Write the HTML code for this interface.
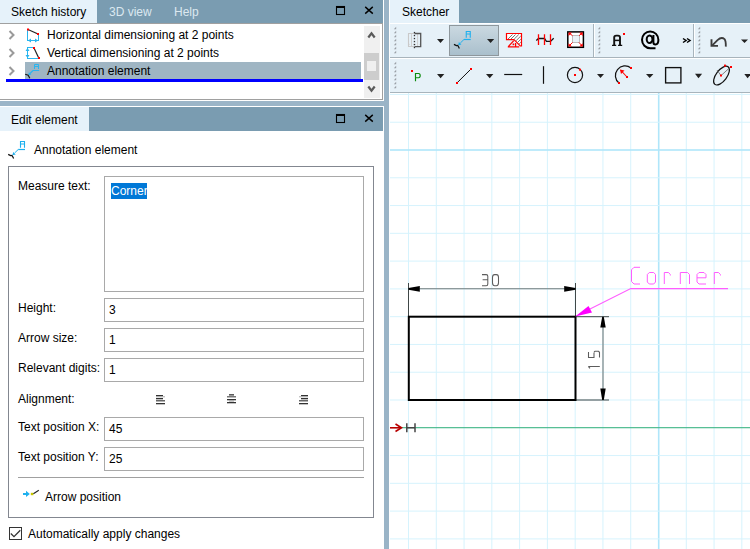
<!DOCTYPE html>
<html><head><meta charset="utf-8">
<style>
*{margin:0;padding:0;box-sizing:border-box}
html,body{width:750px;height:549px;overflow:hidden;background:#fff}
body{position:relative;font-family:"Liberation Sans",sans-serif;font-size:12px;color:#000}
.a{position:absolute}
.t{position:absolute;white-space:nowrap;line-height:14px}
.hdr{background:#7a9cb1}
.tab{background:#e6f2fa}
.inact{color:#dce8f0}
.inp{position:absolute;border:1px solid #a9a9a9;background:#fff}
.grid{position:absolute}
</style></head><body>

<!-- LEFT PANEL -->
<div class="a" style="left:0;top:0;width:384px;height:549px;background:#fff"></div>
<!-- top header -->
<div class="a hdr" style="left:0;top:0;width:383px;height:23px"></div>
<div class="a tab" style="left:0;top:0;width:97px;height:23px"></div>
<div class="t" style="left:11px;top:5px">Sketch history</div>
<div class="t inact" style="left:109px;top:5px">3D view</div>
<div class="t inact" style="left:174px;top:5px">Help</div>
<svg class="a" style="left:334px;top:5px" width="42" height="12" viewBox="334 5 42 12">
 <rect x="336.5" y="6.5" width="8" height="8" fill="none" stroke="#000" stroke-width="1.1"/>
 <rect x="336" y="6" width="9" height="2" fill="#000"/>
 <path d="M365.2 6.9 L372.8 13.6 M372.8 6.9 L365.2 13.6" stroke="#000" stroke-width="1.4"/>
</svg>
<!-- tree box -->
<div class="a" style="left:0;top:23px;width:383px;height:77px;border-top:1px solid #a0a0a0;border-right:1px solid #a0a0a0;border-bottom:1px solid #a0a0a0;background:#fff"></div>

<!-- tree content -->
<svg class="a" style="left:0;top:24px" width="382" height="75" viewBox="0 24 382 75">
 <rect x="25" y="62" width="336" height="17" fill="#9fb5c3"/>
 <rect x="6" y="79" width="357" height="3" fill="#0000ff"/>
 <rect x="364" y="26" width="16" height="72" fill="#f0f0f0"/>
 <rect x="364" y="53" width="15" height="27" fill="#cdcdcd"/>
 <rect x="367" y="61" width="9" height="10" fill="#efefef"/>
 <path d="M368.3 37.5 L371.5 33.3 L374.7 37.5" fill="none" stroke="#5a5a5a" stroke-width="2.2"/>
 <path d="M368.3 86.5 L371.5 90.7 L374.7 86.5" fill="none" stroke="#5a5a5a" stroke-width="2.2"/>
 <g fill="none" stroke="#9a9a9a" stroke-width="2">
  <path d="M9.5 31 L13.5 35 L9.5 39"/>
  <path d="M9.5 49 L13.5 53 L9.5 57"/>
  <path d="M9.5 67 L13.5 71 L9.5 75"/>
 </g>
 <!-- icon1 -->
 <g stroke="#29b5ef" fill="none">
  <path d="M27.5 30 V41 M38.5 34 V41 M28 40.5 H38"/>
 </g>
 <path d="M28 40.5 L31 38.5 V42.5 Z M38 40.5 L35 38.5 V42.5 Z" fill="#29b5ef"/>
 <path d="M28 29.5 L38 34" stroke="#222" stroke-width="1.2"/>
 <rect x="27" y="28.5" width="2" height="2" fill="#f00"/>
 <rect x="37" y="33" width="2" height="2" fill="#f00"/>
 <!-- icon2 -->
 <g stroke="#29b5ef" fill="none">
  <path d="M27 47.5 H34 M27 58.5 H39 M27.5 48 V58"/>
 </g>
 <path d="M27.5 48 L25.5 51 H29.5 Z M27.5 58 L25.5 55 H29.5 Z" fill="#29b5ef"/>
 <path d="M34 48 L38.5 57.5" stroke="#222" stroke-width="1.2"/>
 <rect x="33" y="47" width="2" height="2" fill="#f00"/>
 <rect x="38" y="57" width="2" height="2" fill="#f00"/>
 <!-- icon3 -->
 <g stroke="#29b5ef" fill="none" stroke-width="1">
  <path d="M34.5 69 V64.5 H38.5 V69 M34.5 66.5 H38.5"/>
  <path d="M33 70.5 H39.2 M33 70.5 L30 73.5" stroke-width="1.1"/>
 </g>
 <path d="M28.2 75.3 L28.9 72.2 L31.4 74.6 Z" fill="#29b5ef"/>
 <path d="M25.2 74.2 L28.2 75.3 L29.8 78.2" fill="none" stroke="#1a1a1a" stroke-width="1.2"/>
</svg>
<div class="t" style="left:47px;top:28px">Horizontal dimensioning at 2 points</div>
<div class="t" style="left:47px;top:46px">Vertical dimensioning at 2 points</div>
<div class="t" style="left:47px;top:64px">Annotation element</div>

<!-- strip -->
<div class="a" style="left:0;top:101px;width:384px;height:5px;background:#9bb5c8"></div>
<!-- edit header -->
<div class="a hdr" style="left:0;top:107px;width:383px;height:24px"></div>
<div class="a tab" style="left:0;top:107px;width:89px;height:24px"></div>
<div class="t" style="left:11px;top:113px">Edit element</div>
<svg class="a" style="left:334px;top:113px" width="42" height="12" viewBox="334 113 42 12">
 <rect x="336.5" y="114.5" width="8" height="8" fill="none" stroke="#000" stroke-width="1.1"/>
 <rect x="336" y="114" width="9" height="2" fill="#000"/>
 <path d="M365.2 114.9 L372.8 121.6 M372.8 114.9 L365.2 121.6" stroke="#000" stroke-width="1.4"/>
</svg>

<!-- edit content -->
<svg class="a" style="left:4px;top:138px" width="24" height="24" viewBox="4 138 24 24">
 <g stroke="#1eb0ee" fill="none">
  <path d="M20.5 147.8 V141.5 H24.5 V147.8" stroke-width="1.1"/>
  <path d="M20.5 144 H24.5" stroke-width="1"/>
  <path d="M18.2 149.5 H25" stroke-width="1.2"/>
  <path d="M18.2 149.5 L14.6 153" stroke-width="1"/>
 </g>
 <path d="M12.5 155.3 L13.1 152.1 L15.7 154.6 Z" fill="#1eb0ee"/>
 <path d="M8.2 154.4 L10.6 155.6 L12.6 155.4 M12.4 156 L13.6 158.5" fill="none" stroke="#111" stroke-width="1.2"/>
</svg>
<div class="t" style="left:34px;top:143px">Annotation element</div>
<div class="a" style="left:8px;top:166px;width:366px;height:352px;border:1px solid #838790"></div>
<div class="t" style="left:18px;top:179px">Measure text:</div>
<div class="inp" style="left:104px;top:176px;width:260px;height:116px"></div>
<div class="a" style="left:111px;top:183px;width:36px;height:16px;background:#0078d7"></div>
<div class="t" style="left:111px;top:184px;color:#fff">Corner</div>

<div class="t" style="left:18px;top:301px">Height:</div>
<div class="inp" style="left:104px;top:298px;width:260px;height:24px"></div>
<div class="t" style="left:109px;top:303px">3</div>
<div class="t" style="left:18px;top:331px">Arrow size:</div>
<div class="inp" style="left:104px;top:328px;width:260px;height:24px"></div>
<div class="t" style="left:109px;top:333px">1</div>
<div class="t" style="left:18px;top:361px">Relevant digits:</div>
<div class="inp" style="left:104px;top:358px;width:260px;height:24px"></div>
<div class="t" style="left:109px;top:363px">1</div>
<div class="t" style="left:18px;top:392px">Alignment:</div>
<svg class="a" style="left:150px;top:388px" width="170" height="20" viewBox="150 388 170 20">
 <g fill="#333">
  <rect x="156" y="395" width="7" height="1.3"/><rect x="156" y="396.3" width="9" height="1" fill="#aaa"/>
  <rect x="156" y="398" width="7" height="1.3"/><rect x="156" y="400" width="9" height="1.5" fill="#666"/>
  <rect x="156" y="403" width="9" height="1.3"/>
  <rect x="229" y="394.2" width="5" height="1.3"/><rect x="227" y="396" width="9" height="1.5" fill="#777"/>
  <rect x="227" y="399" width="9" height="1.3"/><rect x="229" y="400.5" width="5" height="1" fill="#999"/>
  <rect x="227" y="402" width="9" height="1.3"/>
  <rect x="301" y="395" width="7" height="1.3"/><rect x="299" y="396.3" width="9" height="1" fill="#aaa"/>
  <rect x="301" y="398" width="7" height="1.3"/><rect x="299" y="400" width="9" height="1.5" fill="#666"/>
  <rect x="299" y="403" width="9" height="1.3"/>
 </g>
</svg>
<div class="t" style="left:18px;top:420px">Text position X:</div>
<div class="inp" style="left:104px;top:417px;width:260px;height:24px"></div>
<div class="t" style="left:109px;top:422px">45</div>
<div class="t" style="left:18px;top:450px">Text position Y:</div>
<div class="inp" style="left:104px;top:447px;width:260px;height:24px"></div>
<div class="t" style="left:109px;top:452px">25</div>
<div class="a" style="left:18px;top:477px;width:346px;height:1px;background:#a0a0a0"></div>
<svg class="a" style="left:20px;top:486px" width="22" height="14" viewBox="20 486 22 14">
 <rect x="23" y="493" width="4" height="2" fill="#1eb0ee"/>
 <path d="M26 490.8 L29.8 494 L26 497 Z" fill="#1eb0ee"/>
 <rect x="30.8" y="492.8" width="2.6" height="2.4" fill="#c8c800"/>
 <path d="M33.4 493.8 L38.8 490.3" stroke="#222" stroke-width="1.1"/>
</svg>
<div class="t" style="left:45px;top:490px">Arrow position</div>
<div class="a" style="left:9px;top:527px;width:13px;height:13px;border:1px solid #333;background:#fff"></div>
<svg class="a" style="left:9px;top:527px" width="13" height="13" viewBox="9 527 13 13">
 <path d="M10.8 533.5 L14 536.6 L20.3 530.3" fill="none" stroke="#333" stroke-width="1.3"/>
</svg>
<div class="t" style="left:28px;top:527px">Automatically apply changes</div>

<!-- splitter -->
<div class="a" style="left:384px;top:0;width:5px;height:549px;background:#9ab4c7"></div>

<!-- RIGHT PANEL -->
<div class="a hdr" style="left:389px;top:0;width:361px;height:23px"></div>
<div class="a tab" style="left:390px;top:0;width:69px;height:23px"></div>
<div class="a" style="left:389px;top:0;width:1px;height:23px;background:#fff"></div>
<div class="t" style="left:402px;top:5px">Sketcher</div>








<!-- TOOLBARS -->
<svg class="a" style="left:389px;top:23px" width="361" height="70" viewBox="389 23 361 70">
 <rect x="389" y="23" width="361" height="70" fill="#fff"/>
 <rect x="390" y="24" width="203" height="33" fill="#e6f1f8"/>
 <rect x="593" y="24" width="1" height="33" fill="#a8b4bc"/>
 <rect x="595" y="24" width="98" height="33" fill="#e6f1f8"/>
 <rect x="693" y="24" width="1" height="33" fill="#a8b4bc"/>
 <rect x="695" y="24" width="55" height="33" fill="#e6f1f8"/>
 <rect x="390" y="57" width="360" height="1" fill="#a8b4bc"/>
 <rect x="390" y="59" width="360" height="33" fill="#e6f1f8"/>
 <rect x="390" y="92" width="360" height="1" fill="#a8b4bc"/>
 <path d="M396.2 26.8 V29.2 H393.8 Z" fill="#9aa0a6"/><path d="M396.2 30.8 V33.2 H393.8 Z" fill="#9aa0a6"/><path d="M396.2 34.8 V37.2 H393.8 Z" fill="#9aa0a6"/><path d="M396.2 38.8 V41.2 H393.8 Z" fill="#9aa0a6"/><path d="M396.2 42.8 V45.2 H393.8 Z" fill="#9aa0a6"/><path d="M396.2 46.8 V49.2 H393.8 Z" fill="#9aa0a6"/><path d="M396.2 50.8 V53.2 H393.8 Z" fill="#9aa0a6"/><path d="M600.2 26.8 V29.2 H597.8 Z" fill="#9aa0a6"/><path d="M600.2 30.8 V33.2 H597.8 Z" fill="#9aa0a6"/><path d="M600.2 34.8 V37.2 H597.8 Z" fill="#9aa0a6"/><path d="M600.2 38.8 V41.2 H597.8 Z" fill="#9aa0a6"/><path d="M600.2 42.8 V45.2 H597.8 Z" fill="#9aa0a6"/><path d="M600.2 46.8 V49.2 H597.8 Z" fill="#9aa0a6"/><path d="M600.2 50.8 V53.2 H597.8 Z" fill="#9aa0a6"/><path d="M700.2 26.8 V29.2 H697.8 Z" fill="#9aa0a6"/><path d="M700.2 30.8 V33.2 H697.8 Z" fill="#9aa0a6"/><path d="M700.2 34.8 V37.2 H697.8 Z" fill="#9aa0a6"/><path d="M700.2 38.8 V41.2 H697.8 Z" fill="#9aa0a6"/><path d="M700.2 42.8 V45.2 H697.8 Z" fill="#9aa0a6"/><path d="M700.2 46.8 V49.2 H697.8 Z" fill="#9aa0a6"/><path d="M700.2 50.8 V53.2 H697.8 Z" fill="#9aa0a6"/><path d="M396.2 61.8 V64.2 H393.8 Z" fill="#9aa0a6"/><path d="M396.2 65.8 V68.2 H393.8 Z" fill="#9aa0a6"/><path d="M396.2 69.8 V72.2 H393.8 Z" fill="#9aa0a6"/><path d="M396.2 73.8 V76.2 H393.8 Z" fill="#9aa0a6"/><path d="M396.2 77.8 V80.2 H393.8 Z" fill="#9aa0a6"/><path d="M396.2 81.8 V84.2 H393.8 Z" fill="#9aa0a6"/><path d="M396.2 85.8 V88.2 H393.8 Z" fill="#9aa0a6"/>
 <!-- mirror icon -->
 <path d="M414.3 33.5 H408.5 V46.5 H414.3" fill="none" stroke="#c9c9c9" stroke-width="1.1"/>
 <path d="M411.5 34 V46 M417.6 34 V46" stroke="#cfcfcf" stroke-width="1"/>
 <path d="M409 44.4 H414 M415 44.4 H420" stroke="#d5d5d5" stroke-width="0.8" stroke-dasharray="1 1"/>
 <path d="M414.5 33.5 H420.7 V46.6 H414.5" fill="none" stroke="#555" stroke-width="1.3"/>
 <g fill="#333"><rect x="413.8" y="31.9" width="1.3" height="1.3"/><rect x="413.8" y="34.9" width="1.3" height="1.3"/><rect x="413.8" y="37.9" width="1.3" height="1.3"/><rect x="413.8" y="40.9" width="1.3" height="1.3"/><rect x="413.8" y="43.9" width="1.3" height="1.3"/><rect x="413.8" y="46.9" width="1.3" height="1.3"/></g>
 <path d="M437 39 H444 L440.5 43 Z" fill="#222"/>
 <!-- active annotation button -->
 <defs><linearGradient id="ab" x1="0" y1="0" x2="0" y2="1"><stop offset="0" stop-color="#cbd9e1"/><stop offset="1" stop-color="#a9bfcc"/></linearGradient></defs>
 <rect x="449.5" y="25.5" width="49" height="30" fill="url(#ab)" stroke="#8e979c"/>
 <g transform="translate(445.75,-110)"><g stroke="#1eb0ee" fill="none">
  <path d="M20.5 147.8 V141.5 H24.5 V147.8" stroke-width="1.1"/>
  <path d="M20.5 144 H24.5" stroke-width="1"/>
  <path d="M18.2 149.5 H25" stroke-width="1.2"/>
  <path d="M18.2 149.5 L14.6 153" stroke-width="1"/>
 </g>
 <path d="M12.5 155.3 L13.1 152.1 L15.7 154.6 Z" fill="#1eb0ee"/>
 <path d="M8.2 154.4 L10.6 155.6 L12.6 155.4 M12.4 156 L13.6 158.5" fill="none" stroke="#111" stroke-width="1.2"/></g>
 <path d="M487 39 H494.2 L490.6 43 Z" fill="#222"/>
 <!-- fix icon -->
 <path d="M506.5 33.5 H521.5 V46 H520.3 L514 39.7 H506.5 Z" fill="#fff" stroke="#f00" stroke-width="1.2"/>
 <g stroke="#777" stroke-width="1">
  <path d="M508 39 L512.5 34.5 M511 39 L515.5 34.5 M514.2 39.1 L518.8 34.5 M516.2 40.6 L520.8 36 M517.8 42.2 L520.8 39.2 M519.3 43.7 L520.8 42.2"/>
 </g>
 <path d="M508.3 46.6 L513.8 40.6 M507.8 46.8 H519.2 M515.6 43 V46.6" fill="none" stroke="#f00" stroke-width="1.2"/>
 <rect x="512.6" y="43.5" width="1.7" height="1.7" fill="#f00"/>
 <!-- equal/parallel icon -->
 <path d="M536.3 40.5 L538.5 38.5 H544.5 L546.4 41.4 H550.5 L553.7 38.2" fill="none" stroke="#111" stroke-width="1.3"/>
 <path d="M538.5 34.2 V45 M544.5 34.2 V45 M550.5 34.2 V45" stroke="#f00" stroke-width="1.3"/>
 <!-- square icon -->
 <rect x="567.8" y="31.9" width="15.6" height="15.4" fill="#fff" stroke="#000" stroke-width="1.5"/>
 <path d="M568.5 32.6 H572 L568.5 36 Z M582.7 32.6 H579.2 L582.7 36 Z M568.5 46.6 H572 L568.5 43.2 Z M582.7 46.6 H579.2 L582.7 43.2 Z" fill="#f00"/>
 <rect x="572.5" y="35.5" width="7" height="7" fill="#eaf2f8" stroke="#bdbdbd" stroke-width="1"/>
 <path d="M569 33 L572.5 35.7 M582.3 33 L579 35.7 M569 46 L572.5 42.5 M582.3 46 L579 42.5" stroke="#f00" stroke-width="1"/>
 <!-- A icon -->
 <g fill="none" stroke="#111">
  <path d="M614.2 45.3 V37.5 Q614.2 35.6 616.2 35.6 H618 Q620 35.6 620 37.5 V45.3" stroke-width="1.9"/>
  <path d="M614.5 40.4 H619.7" stroke-width="1.5"/>
  <path d="M612 45.3 H616.2 M618 45.3 H622.2" stroke-width="1.3"/>
 </g>
 <rect x="623" y="33" width="2" height="2" fill="#f00"/>
 <g fill="none" stroke="#000" stroke-width="2">
  <ellipse cx="649.6" cy="39.3" rx="2.9" ry="3.8"/>
  <path d="M653.4 35 V42.3 Q653.4 44.5 655.5 44.5 Q658.4 44.5 658.4 39.8 A8.2 8.4 0 1 0 650.2 48.2 H655.5"/>
 </g>
 <path d="M683 38.5 L686 40.5 L683 42.5 M687 38.5 L690 40.5 L687 42.5" fill="none" stroke="#000" stroke-width="1.5"/>
 <!-- undo -->
 <path d="M712.3 45.3 L717.5 40.2 Q721.5 36.5 724.5 39.2 Q726 41 725.8 46.6" fill="none" stroke="#3c3c3c" stroke-width="1.8"/>
 <path d="M711.5 39.3 V45.9 H718" fill="none" stroke="#3c3c3c" stroke-width="1.9"/>
 <path d="M741 39.5 H748 L744.5 43 Z" fill="#222"/>
 <!-- row 2 -->
 <rect x="411" y="70" width="2" height="2" fill="#f00"/>
 <path d="M415.5 81.3 V73.5 H418.6 Q420.2 73.5 420.2 75.6 Q420.2 77.7 418.6 77.7 H415.5" fill="none" stroke="#0b8a0b" stroke-width="1.15"/>
 <path d="M437 74 H444.3 L440.6 78.2 Z" fill="#222"/>
 <path d="M457 82.9 L471 69" stroke="#111" stroke-width="1"/>
 <rect x="456" y="82" width="2" height="2" fill="#f00"/><rect x="470" y="68" width="2" height="2" fill="#f00"/>
 <path d="M486 74 H493.4 L489.7 78.2 Z" fill="#222"/>
 <path d="M504.2 74.5 H522.2" stroke="#111" stroke-width="1.2"/>
 <path d="M543.5 66.2 V83.8" stroke="#111" stroke-width="1.2"/>
 <circle cx="575" cy="75" r="7.6" fill="none" stroke="#111" stroke-width="1.2"/>
 <rect x="574" y="74" width="2" height="2" fill="#f00"/><rect x="579" y="68.7" width="2" height="2" fill="#f00"/>
 <path d="M597 74 H604 L600.5 78 Z" fill="#222"/>
 <path d="M619 83 A 9.5 9.5 0 0 1 631 68" fill="none" stroke="#111" stroke-width="1.2"/>
 <path d="M627 77 L620.5 70" stroke="#f00" stroke-width="1.1"/>
 <path d="M620 69.5 L624.5 70.5 L621 74 Z" fill="#f00"/>
 <rect x="626" y="76" width="2" height="2" fill="#f00"/><rect x="630" y="67" width="2" height="2" fill="#f00"/><rect x="618" y="82" width="2" height="2" fill="#f00"/>
 <path d="M646 74 H653.4 L649.7 78 Z" fill="#222"/>
 <rect x="665.6" y="67.6" width="15.3" height="15.3" fill="none" stroke="#111" stroke-width="1.35"/>
 <path d="M695 73.8 H702.1 L698.5 78.2 Z" fill="#222"/>
 <ellipse cx="721.5" cy="75.6" rx="11" ry="5.4" transform="rotate(-53 721.5 75.6)" fill="none" stroke="#111" stroke-width="1.2"/>
 <path d="M721 75.6 L730.5 67 M721 75.6 L717 70" stroke="#666" stroke-width="0.8"/>
 <rect x="720" y="74.5" width="2" height="2" fill="#f00"/><rect x="724" y="64.6" width="2" height="2" fill="#f00"/><rect x="730" y="66" width="2" height="2" fill="#f00"/>
 <path d="M744.3 74 H751 L747.6 78.2 Z" fill="#222"/>
</svg>

<!-- CANVAS -->
<svg class="a" style="left:389px;top:93px" width="361" height="456" viewBox="389 93 361 456">
 <rect x="389" y="93" width="361" height="456" fill="#fff"/>
 <rect x="408.00" y="93" width="1" height="456" fill="#d6f3fd"/>
 <rect x="435.78" y="93" width="1" height="456" fill="#d6f3fd"/>
 <rect x="463.56" y="93" width="1" height="456" fill="#d6f3fd"/>
 <rect x="491.33" y="93" width="1" height="456" fill="#d6f3fd"/>
 <rect x="519.11" y="93" width="1" height="456" fill="#d6f3fd"/>
 <rect x="546.89" y="93" width="1" height="456" fill="#d6f3fd"/>
 <rect x="574.67" y="93" width="1" height="456" fill="#d6f3fd"/>
 <rect x="602.44" y="93" width="1" height="456" fill="#d6f3fd"/>
 <rect x="630.22" y="93" width="1" height="456" fill="#d6f3fd"/>
 <rect x="657.9" y="93" width="1.6" height="456" fill="#b0e6fa"/>
 <rect x="685.78" y="93" width="1" height="456" fill="#d6f3fd"/>
 <rect x="713.56" y="93" width="1" height="456" fill="#d6f3fd"/>
 <rect x="741.33" y="93" width="1" height="456" fill="#d6f3fd"/>
 <rect x="390" y="93.94" width="360" height="1" fill="#d6f3fd"/>
 <rect x="390" y="121.72" width="360" height="1" fill="#d6f3fd"/>
 <rect x="390" y="149.2" width="360" height="1.6" fill="#b0e6fa"/>
 <rect x="390" y="177.28" width="360" height="1" fill="#d6f3fd"/>
 <rect x="390" y="205.06" width="360" height="1" fill="#d6f3fd"/>
 <rect x="390" y="232.83" width="360" height="1" fill="#d6f3fd"/>
 <rect x="390" y="260.61" width="360" height="1" fill="#d6f3fd"/>
 <rect x="390" y="288.39" width="360" height="1" fill="#d6f3fd"/>
 <rect x="390" y="316.17" width="360" height="1" fill="#d6f3fd"/>
 <rect x="390" y="343.94" width="360" height="1" fill="#d6f3fd"/>
 <rect x="390" y="371.72" width="360" height="1" fill="#d6f3fd"/>
 <rect x="390" y="399.50" width="360" height="1" fill="#d6f3fd"/>
 <rect x="390" y="455.06" width="360" height="1" fill="#d6f3fd"/>
 <rect x="390" y="482.83" width="360" height="1" fill="#d6f3fd"/>
 <rect x="390" y="510.61" width="360" height="1" fill="#d6f3fd"/>
 <rect x="390" y="538.39" width="360" height="1" fill="#d6f3fd"/>
 <!-- green axis -->
 <rect x="401" y="427.1" width="349" height="1.15" fill="#45b88a"/>
 <path d="M390 427.8 H401" stroke="#b80000" stroke-width="1.6"/>
 <path d="M395.5 424 L401.5 427.8 L395.5 431.5" fill="none" stroke="#b80000" stroke-width="1.6"/>
 <path d="M406.8 423.3 V432.2 M415 423.3 V432.2 M406.8 427.8 H415" fill="none" stroke="#454545" stroke-width="1.5"/>
 <!-- dimension 30 -->
 <path d="M408.5 283 V316 M575.5 283 V316" stroke="#404848" stroke-width="1"/>
 <path d="M419 288.8 H565" stroke="#6f7a7a" stroke-width="1.1"/>
 <path d="M408.5 288 L419.8 286 V291.7 L408.5 289.8 Z" fill="#000"/>
 <path d="M575.5 288 L564.2 286 V291.7 L575.5 289.8 Z" fill="#000"/>
 <g fill="none" stroke="#5c5c5c" stroke-width="1.05">
  <path d="M482 274.6 H486.2 Q487.8 274.6 487.8 276.3 V284 Q487.8 285.7 486.2 285.7 H482 M482.6 279.8 H487.8"/>
  <path d="M494.6 274.6 H496.4 Q498.5 274.6 498.5 277.5 V282.8 Q498.5 285.7 496.4 285.7 H494.6 Q492.5 285.7 492.5 282.8 V277.5 Q492.5 274.6 494.6 274.6 Z"/>
 </g>
 <!-- dimension 15 -->
 <path d="M576 316.7 H609 M576 400 H609" stroke="#404848" stroke-width="1"/>
 <path d="M603 327 V389" stroke="#6f7a7a" stroke-width="1.1"/>
 <path d="M602.2 316.7 L600.3 327.5 H605.7 L603.8 316.7 Z" fill="#000"/>
 <path d="M602.2 400 L600.3 388.5 H605.7 L603.8 400 Z" fill="#000"/>
 <g fill="none" stroke="#5c5c5c" stroke-width="1.05">
  <path d="M588.3 366.4 H599.8 M588.3 366.4 L590 368.3"/>
  <path d="M588.5 352 V357.4 H594 V352.5 M594 352 L595 351.3 H598.5 L599.5 352.3 V357.4"/>
 </g>
 <!-- rectangle -->
 <rect x="408.8" y="316.7" width="166.7" height="83.3" fill="none" stroke="#000" stroke-width="2"/>
 <!-- annotation -->
 <path d="M589 309.5 L630.8 288.6 H728" fill="none" stroke="#ff5cff" stroke-width="1.05"/>
 <path d="M575.2 316.6 L588.5 306 L592 312.4 Z" fill="#ff00ff"/>
 <g fill="none" stroke="#ff5cff" stroke-width="1">
  <path d="M640 267.3 H634 L631.5 269.8 V281.5 L634 284 H640"/>
  <path d="M649.3 272.5 H653.7 L655.5 274.5 V282 L653.7 284 H649.3 L647.3 282 V274.5 Z"/>
  <path d="M664.3 284 V272.5 H668.5 L670.3 274.5 V275.5"/>
  <path d="M680.3 284 V272.5 H687.5 L689.5 274.5 V284"/>
  <path d="M706 284 H699 L697 282 V274.5 L699 272.5 H704 L706 274.5 V277.8 H697"/>
  <path d="M714.3 284 V272.5 H718.5 L720.4 274.5 V275.5"/>
 </g>
</svg>

</body></html>
